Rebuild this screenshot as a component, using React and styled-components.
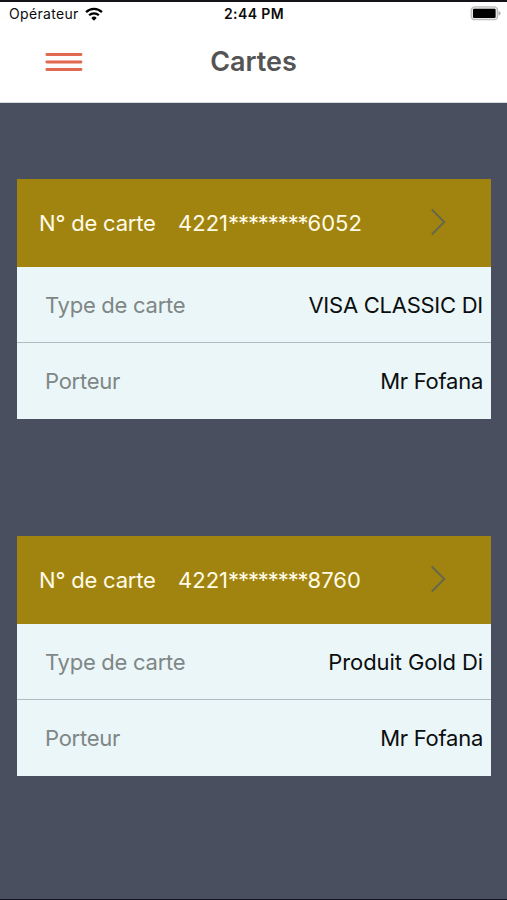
import React from "react";
import styled, { createGlobalStyle } from "styled-components";

const GlobalStyle = createGlobalStyle`
  * {
    box-sizing: border-box;
  }
  body {
    margin: 0;
    font-family: Inter, "Liberation Sans", sans-serif;
    background: #4a4f5f;
  }
`;

const Screen = styled.div`
  display: flex;
  flex-direction: column;
  height: 900px;
  overflow: hidden;
  background: #4a4f5f;
  border-top: 2px solid #151317;
  border-bottom: 1px solid #10131f;
`;

const Header = styled.header`
  height: 101px;
  background: #ffffff;
  border-bottom: 1px solid #d9dadd;
`;

const StatusBar = styled.div`
  display: grid;
  grid-template-columns: 1fr auto 1fr;
  align-items: center;
  height: 23px;
  padding: 0 6px 0 9px;
  color: #0c0c0c;
`;

const Carrier = styled.div`
  display: flex;
  align-items: center;
  gap: 6px;
  font-size: 14px;
  letter-spacing: 0.32px;
`;

const Clock = styled.div`
  margin-right: 2px;
  font-size: 14px;
  font-weight: 600;
  letter-spacing: 0.4px;
`;

const BatteryIcon = styled.svg`
  justify-self: end;
`;

const NavBar = styled.nav`
  display: grid;
  grid-template-columns: 1fr auto 1fr;
  align-items: center;
  height: 73px;
  padding: 0 45px;
`;

const MenuButton = styled.button`
  display: flex;
  width: 38px;
  padding: 0;
  border: 0;
  background: none;
`;

const Title = styled.h1`
  margin: 0;
  color: #545454;
  font-size: 27px;
  font-weight: 600;
  line-height: 32px;
`;

const CardList = styled.main`
  display: flex;
  flex-direction: column;
  gap: 117px;
  padding: 76px 16px 0 17px;
`;

const Card = styled.section`
  height: 240px;
  background: #ebf6f8;
`;

const CardHeader = styled.div`
  display: flex;
  align-items: center;
  height: 88px;
  padding: 0 45px 1px 22px;
  background: #a1840f;
  color: #fffbe6;
  font-size: 22px;
`;

const CardLabel = styled.span`
  width: 139px;
  letter-spacing: -0.2px;
`;

const CardNumber = styled.span`
  flex: 1;
`;

const Mask = styled.span`
  letter-spacing: -1.08px;
`;

const Chevron = styled.svg`
  margin-bottom: 1px;
`;

const Row = styled.div`
  display: flex;
  align-items: center;
  justify-content: space-between;
  height: 75px;
  padding: 0 8px 0 28px;
  font-size: 22px;
  letter-spacing: -0.26px;

  & + & {
    height: 77px;
    border-top: 1px solid #b1babf;
  }
`;

const RowLabel = styled.span`
  color: #7f8686;
`;

const RowValue = styled.span`
  color: #0b0e0f;
  letter-spacing: ${(props) => props.$spacing || "inherit"};
`;

const cards = [
  { start: "4221", end: "6052", type: "VISA CLASSIC DI", holder: "Mr Fofana" },
  { start: "4221", end: "8760", type: "Produit Gold Di", holder: "Mr Fofana", spacing: "-0.1px" },
];

function Wifi() {
  return (
    <svg width="18" height="14" viewBox="0 0 18 14" fill="none" stroke="#000">
      <path d="M1.1 5.1A11.3 11.3 0 0 1 16.9 5.1" strokeWidth="2.3" />
      <path d="M4.1 8.3A7 7 0 0 1 13.9 8.3" strokeWidth="2.2" />
      <path d="M9 13.7 6.3 10.9A3.8 3.8 0 0 1 11.7 10.9Z" fill="#000" stroke="none" />
    </svg>
  );
}

function Battery() {
  return (
    <BatteryIcon width="31" height="15" viewBox="0 0 31 15">
      <rect x="1.2" y="0.9" width="26.4" height="12.8" rx="3.5" fill="#e6e6e6" stroke="#bdbdbd" strokeWidth="1.3" />
      <rect x="3" y="2.8" width="22.6" height="9.2" rx="1.2" fill="#000" />
      <path d="M28.6 4.9C31.2 5.8 31.2 8.6 28.6 9.5Z" fill="#ababab" />
    </BatteryIcon>
  );
}

function CardItem({ card }) {
  return (
    <Card>
      <CardHeader>
        <CardLabel>N° de carte</CardLabel>
        <CardNumber>
          {card.start}
          <Mask>********</Mask>
          {card.end}
        </CardNumber>
        <Chevron width="16" height="28" viewBox="0 0 16 28" fill="none">
          <path d="M1.8 1.5 14.2 14 1.8 26.5" stroke="#66684c" strokeWidth="2" />
        </Chevron>
      </CardHeader>
      <Row>
        <RowLabel>Type de carte</RowLabel>
        <RowValue $spacing={card.spacing}>{card.type}</RowValue>
      </Row>
      <Row>
        <RowLabel>Porteur</RowLabel>
        <RowValue>{card.holder}</RowValue>
      </Row>
    </Card>
  );
}

export default function App() {
  return (
    <>
      <GlobalStyle />
      <Screen>
        <Header>
          <StatusBar>
            <Carrier>
              Opérateur
              <Wifi />
            </Carrier>
            <Clock>2:44 PM</Clock>
            <Battery />
          </StatusBar>
          <NavBar>
            <MenuButton aria-label="Menu">
              <svg width="38" height="20" viewBox="0 0 38 20" stroke="#e0694f" strokeWidth="2.8" strokeLinecap="round">
                <path d="M1.8 2.5H36M1.8 10H36M1.8 17.5H36" />
              </svg>
            </MenuButton>
            <Title>Cartes</Title>
          </NavBar>
        </Header>
        <CardList>
          {cards.map((card) => (
            <CardItem key={card.end} card={card} />
          ))}
        </CardList>
      </Screen>
    </>
  );
}
